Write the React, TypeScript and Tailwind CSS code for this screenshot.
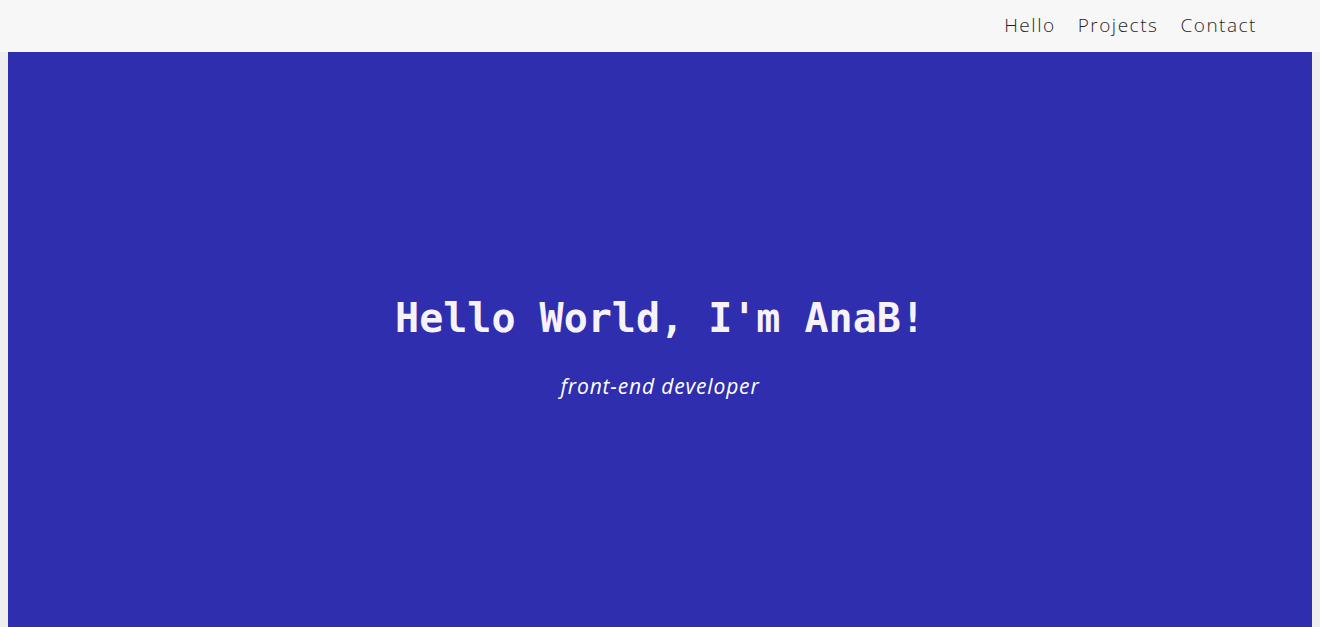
import React from "react";

export default function App() {
  return (
    <div className="min-h-screen bg-[#eeeeee]">
      <header className="h-[52px] bg-[#f7f7f7] flex items-center justify-end pr-[63px]">
        <nav className="flex gap-[22px] text-[19px] font-light tracking-[0.08em] text-[#1f1f1f] pb-[1px]" style={{ fontFamily: '"Open Sans", "Liberation Sans", sans-serif' }}>
          <a>Hello</a>
          <a>Projects</a>
          <a>Contact</a>
        </nav>
      </header>
      <main className="mx-2 h-[600px] bg-[#2f2eae] flex flex-col items-center pt-[238px]">
        <h1 className="text-[40px] font-bold text-[#f7f2f7] leading-[56px]" style={{ fontFamily: '"DejaVu Sans Mono", "Liberation Mono", monospace' }}>
          Hello World, I'm AnaB!
        </h1>
        <p className="mt-[25px] text-[21px] italic tracking-[0.04em] text-white" style={{ fontFamily: '"Open Sans", "Liberation Sans", sans-serif' }}>
          front-end developer
        </p>
      </main>
    </div>
  );
}
